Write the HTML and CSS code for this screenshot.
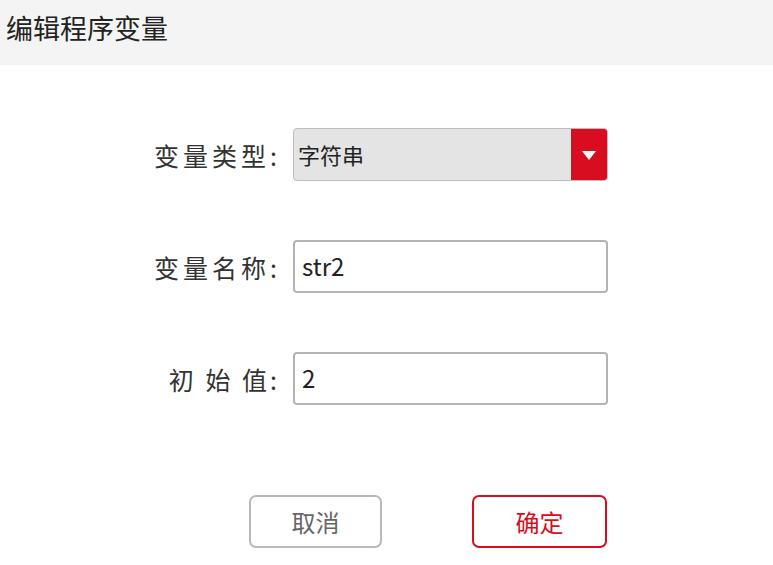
FILE: index.html
```html
<!DOCTYPE html>
<html lang="zh-CN">

<head>
    <meta charset="UTF-8">
    <meta name="viewport" content="width=device-width, initial-scale=1.0">
    <title>编辑程序变量</title>
    <link rel="stylesheet" href="styles.css">
</head>

<body>
    <!-- 标题栏 -->
    <div class="title-bar">编辑程序变量</div>

    <!-- 表单 -->
    <div class="form">
        <label class="label">变量类型:</label>
        <div class="select">
            <span class="select-text">字符串</span>
            <span class="select-arrow"></span>
        </div>

        <label class="label">变量名称:</label>
        <div class="input">str2</div>

        <label class="label label-spaced">初 始 值:</label>
        <div class="input">2</div>
    </div>

    <!-- 按钮 -->
    <div class="actions">
        <a class="btn btn-cancel" href="#">取消</a>
        <a class="btn btn-ok" href="#">确定</a>
    </div>
</body>

</html>
```
FILE: styles.css
```css
* {
    margin: 0;
    padding: 0;
    box-sizing: border-box;
}

body {
    width: 773px;
    height: 565px;
    background: #fff;
    font-family: "Noto Sans CJK SC", "Noto Sans", sans-serif;
    color: #333;
    overflow: hidden;
}

/* 标题栏 */
.title-bar {
    height: 65px;
    padding-left: 6px;
    line-height: 56px;
    font-size: 27px;
    color: #222;
    background: #f4f4f4;
}

/* 表单部分 */
.form {
    display: grid;
    grid-template-columns: 277px 315px;
    grid-auto-rows: 53px;
    column-gap: 16px;
    row-gap: 59px;
    padding-top: 63px;
}

.label {
    justify-self: end;
    align-self: center;
    font-size: 25px;
    letter-spacing: 4px;
    margin-right: -4px;
    color: #333;
}

.label-spaced {
    letter-spacing: 3px;
    margin-right: -3px;
}

.select {
    display: flex;
    border: 1px solid #bdbdbd;
    border-radius: 4px;
    background: #e4e4e4;
    overflow: hidden;
}

.select-text {
    flex: 1;
    padding-left: 4px;
    line-height: 50px;
    font-size: 22px;
    color: #222;
}

.select-arrow {
    width: 36px;
    background: #d80d20;
    position: relative;
}

.select-arrow:after {
    content: "";
    position: absolute;
    left: 11px;
    top: 22px;
    border-left: 7px solid transparent;
    border-right: 7px solid transparent;
    border-top: 9px solid #fff;
}

.input {
    border: 2px solid #b3b3b3;
    border-radius: 4px;
    padding-left: 7px;
    line-height: 48px;
    font-size: 24px;
    color: #222;
}

/* 按钮 */
.actions {
    display: flex;
    gap: 90px;
    padding: 90px 0 0 249px;
}

.btn {
    display: block;
    height: 53px;
    line-height: 49px;
    text-align: center;
    font-size: 24px;
    text-decoration: none;
    border-radius: 7px;
    border: 2px solid;
}

.btn-cancel {
    width: 133px;
    color: #666;
    border-color: #b9b9b9;
}

.btn-ok {
    width: 135px;
    color: #d80d20;
    border-color: #d80d20;
}
```
